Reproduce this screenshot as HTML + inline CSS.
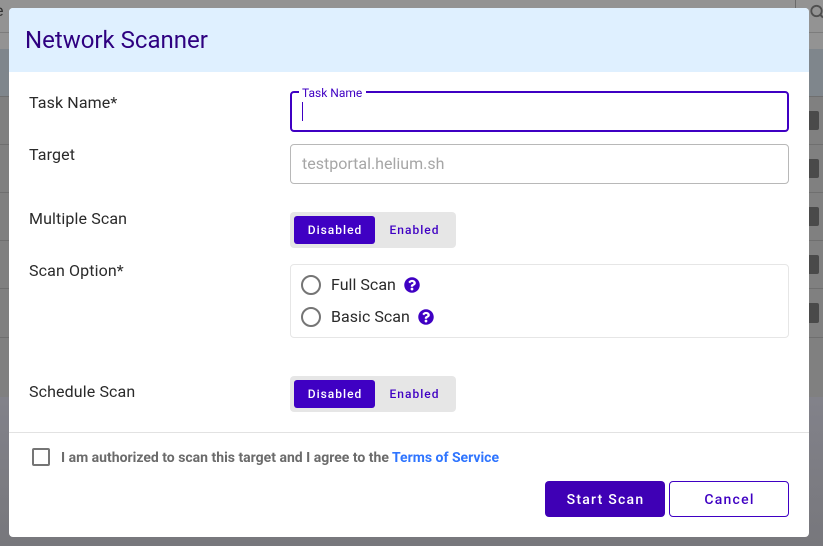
<!DOCTYPE html>
<html><head><meta charset="utf-8">
<style>
*{box-sizing:border-box;margin:0;padding:0}
html,body{width:823px;height:546px;overflow:hidden;background:#939393;font-family:Roboto,"Liberation Sans",sans-serif}
.a{position:absolute}
.t{position:absolute;white-space:nowrap;line-height:20px}
.lbl{font-size:16px;color:#2a2a2a;letter-spacing:.12px;left:29px}
.seg{position:absolute;left:290px;width:166px;height:36px;background:#e6e6e6;border-radius:4px}
.seg b{position:absolute;left:4px;top:4px;width:81px;height:28px;padding-left:1px;background:#3f00c3;border-radius:3px;color:#fff;font-size:12px;font-weight:500;text-align:center;line-height:28px;letter-spacing:1px}
.seg i{position:absolute;left:85px;top:4px;width:79px;height:28px;color:#3f00c3;font-style:normal;font-size:12px;font-weight:500;text-align:center;line-height:28px;letter-spacing:1px}
.radio{position:absolute;left:301px;width:20px;height:20px;border:2px solid #757575;border-radius:50%}
.q{position:absolute;width:16px;height:16px}
</style></head><body>
<div class="a" style="left:0;top:49px;width:823px;height:47px;background:#7f868c"></div>
<div class="a" style="left:0;top:96px;width:823px;height:301px;background:#808080"></div>
<div class="a" style="left:0;top:397px;width:823px;height:149px;background:linear-gradient(#82828a,#77777c)"></div>
<div class="a" style="left:0;top:32px;width:823px;height:1px;background:#7c7c7c"></div>
<div class="a" style="left:0;top:96px;width:823px;height:1px;background:#6f6f6f"></div>
<div class="a" style="left:0;top:144px;width:823px;height:1px;background:#6f6f6f"></div>
<div class="a" style="left:0;top:192px;width:823px;height:1px;background:#6f6f6f"></div>
<div class="a" style="left:0;top:240px;width:823px;height:1px;background:#6f6f6f"></div>
<div class="a" style="left:0;top:288px;width:823px;height:1px;background:#6f6f6f"></div>
<div class="a" style="left:0;top:337px;width:823px;height:1px;background:#6f6f6f"></div>
<div class="a" style="left:795px;top:0;width:1px;height:10px;background:#6a6a6a"></div>
<div class="a" style="left:805px;top:111px;width:14px;height:19px;background:#4a4a4a;border-radius:2px"></div>
<div class="a" style="left:805px;top:159px;width:14px;height:19px;background:#4a4a4a;border-radius:2px"></div>
<div class="a" style="left:805px;top:207px;width:14px;height:19px;background:#4a4a4a;border-radius:2px"></div>
<div class="a" style="left:805px;top:255px;width:14px;height:19px;background:#4a4a4a;border-radius:2px"></div>
<div class="a" style="left:805px;top:303px;width:14px;height:20px;background:#4a4a4a;border-radius:2px"></div>
<svg class="a" style="left:809px;top:3px" width="14" height="16"><circle cx="7.500" cy="8" r="5.200" fill="none" stroke="#4f4f4f" stroke-width="1.800"/><path d="M11 11.500L14 14.500" stroke="#4f4f4f" stroke-width="2"/></svg>
<div class="t" style="left:-5px;top:1px;font-size:16px;color:#333">e</div>

<div class="a" style="left:9px;top:8px;width:800px;height:529px;background:#fff;border-radius:4px;overflow:hidden">
  <div class="a" style="left:0;top:0;width:800px;height:64px;background:#dff0ff"></div>
</div>
<div class="t" style="left:25px;top:26px;font-size:24px;line-height:28px;color:#2e0080">Network Scanner</div>

<div class="t lbl" style="top:93px">Task Name*</div>
<div class="t lbl" style="top:145px">Target</div>
<div class="t lbl" style="top:209px">Multiple Scan</div>
<div class="t lbl" style="top:261px">Scan Option*</div>
<div class="t lbl" style="top:382px">Schedule Scan</div>

<div class="a" style="left:290px;top:91px;width:499px;height:41px;border:2px solid #3f00c3;border-radius:4px"></div>
<div class="a" style="left:299px;top:89px;width:67px;height:5px;background:#fff"></div>
<div class="t" style="left:302px;top:85px;font-size:12px;line-height:16px;color:#3f00c3">Task Name</div>
<div class="a" style="left:302px;top:102px;width:1px;height:19px;background:#3f00c3"></div>

<div class="a" style="left:290px;top:144px;width:499px;height:40px;border:1px solid #b8b8b8;border-radius:4px"></div>
<div class="t" style="left:302px;top:154px;font-size:16px;color:#a6a6a6">testportal.helium.sh</div>

<div class="seg" style="top:212px"><b>Disabled</b><i>Enabled</i></div>

<div class="a" style="left:290px;top:264px;width:499px;height:74px;border:1px solid #e6e6e6;border-radius:4px"></div>
<div class="radio" style="top:275px"></div>
<div class="t lbl" style="left:331px;top:275px;letter-spacing:.03px">Full Scan</div>
<svg class="q" style="left:404px;top:277px" viewBox="0 0 512 512"><path fill="#3f00c3" d="M504 256c0 136.997-111.043 248-248 248S8 392.997 8 256C8 119.083 119.043 8 256 8s248 111.083 248 248zM262.655 90c-54.497 0-89.255 22.957-116.549 63.758-3.536 5.286-2.353 12.415 2.715 16.258l34.699 26.31c5.205 3.947 12.621 3.008 16.665-2.122 17.864-22.658 30.113-35.797 57.303-35.797 20.429 0 45.698 13.148 45.698 32.958 0 14.976-12.363 22.667-32.534 33.976C247.128 238.528 216 254.941 216 296v4c0 6.627 5.373 12 12 12h56c6.627 0 12-5.373 12-12v-1.333c0-28.462 83.186-29.647 83.186-106.667 0-58.002-60.165-102-116.531-102zM256 338c-25.365 0-46 20.635-46 46 0 25.364 20.635 46 46 46s46-20.636 46-46c0-25.365-20.635-46-46-46z"/></svg>
<div class="radio" style="top:307px"></div>
<div class="t lbl" style="left:331px;top:307px;letter-spacing:.03px">Basic Scan</div>
<svg class="q" style="left:418px;top:309px" viewBox="0 0 512 512"><path fill="#3f00c3" d="M504 256c0 136.997-111.043 248-248 248S8 392.997 8 256C8 119.083 119.043 8 256 8s248 111.083 248 248zM262.655 90c-54.497 0-89.255 22.957-116.549 63.758-3.536 5.286-2.353 12.415 2.715 16.258l34.699 26.31c5.205 3.947 12.621 3.008 16.665-2.122 17.864-22.658 30.113-35.797 57.303-35.797 20.429 0 45.698 13.148 45.698 32.958 0 14.976-12.363 22.667-32.534 33.976C247.128 238.528 216 254.941 216 296v4c0 6.627 5.373 12 12 12h56c6.627 0 12-5.373 12-12v-1.333c0-28.462 83.186-29.647 83.186-106.667 0-58.002-60.165-102-116.531-102zM256 338c-25.365 0-46 20.635-46 46 0 25.364 20.635 46 46 46s46-20.636 46-46c0-25.365-20.635-46-46-46z"/></svg>

<div class="seg" style="top:376px"><b>Disabled</b><i>Enabled</i></div>

<div class="a" style="left:9px;top:432px;width:800px;height:1px;background:#e2e2e2"></div>
<div class="a" style="left:32px;top:448px;width:18px;height:18px;border:2px solid #757575;border-radius:2px"></div>
<div class="t" style="left:61px;top:448px;font-size:14px;font-weight:700;color:#6b6b6b">I am authorized to scan this target and I agree to the <span style="color:#2f75ff">Terms of Service</span></div>

<div class="a" style="left:545px;top:481px;width:120px;height:36px;padding-left:1px;background:#3f00b5;border-radius:4px;color:#fff;font-size:14px;font-weight:500;text-align:center;line-height:38px;letter-spacing:1.25px">Start Scan</div>
<div class="a" style="left:669px;top:481px;width:120px;height:36px;padding-left:1px;background:#fff;border:1px solid #3f00c3;border-radius:4px;color:#3f00c3;font-size:14px;font-weight:500;text-align:center;line-height:36px;letter-spacing:1.25px">Cancel</div>
</body></html>
